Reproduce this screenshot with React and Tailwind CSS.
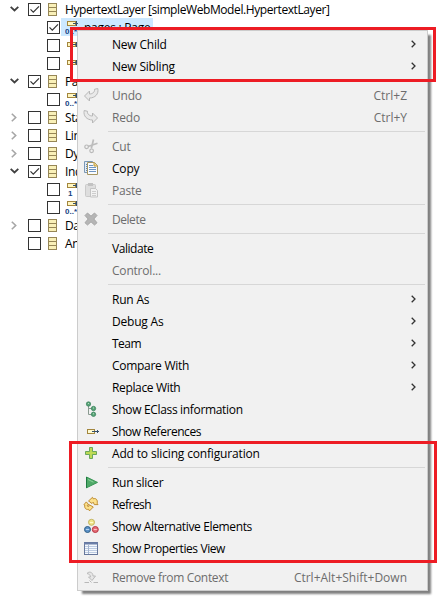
import React from "react";

const Svg = ({ children, w = 16, h = 16 }) => (
  <svg width={w} height={h} viewBox={`0 0 ${w} ${h}`} fill="none" className="block shrink-0">
    {children}
  </svg>
);

const CurvedArrow = () => (
  <path d="M1.5 9 L6.5 4 V7 C9.5 7 12 5 11.5 2.3 L14.8 1.5 C16 7 12 11 6.5 11 V14 Z" fill="#e9e9e9" stroke="#b8b8b8" strokeLinejoin="round" />
);

const icons = {
  undo: <Svg><CurvedArrow /></Svg>,
  redo: <Svg><g transform="matrix(-1 0 0 1 16 0)"><CurvedArrow /></g></Svg>,
  cut: (
    <Svg>
      <path d="M10.5 1.5 L8.3 10.5 M14.5 5.3 L5 8.5" stroke="#bcbcbc" strokeWidth="1.7" />
      <circle cx="3.6" cy="8.8" r="1.8" stroke="#b8b8b8" strokeWidth="1.2" />
      <circle cx="8.6" cy="12.8" r="1.8" stroke="#b8b8b8" strokeWidth="1.2" />
    </Svg>
  ),
  copy: (
    <Svg>
      <path d="M1.5 1.5 H9.5 V12.5 H1.5 Z" fill="#e4ecf5" stroke="#7b98b5" />
      <path d="M3 4.5 H5 M3 6.5 H5 M3 8.5 H5 M3 10.5 H5" stroke="#5c86b5" />
      <path d="M4.5 2.5 H11.5 L14.5 5.5 V14.5 H4.5 Z" fill="#fafcff" stroke="#a69662" />
      <path d="M11 2.5 V6 H14.5" fill="#efd88a" stroke="#c09a3c" />
      <path d="M6 5.5 H10 M6 7.5 H13 M6 9.5 H13 M6 11.5 H13" stroke="#6d94c2" />
    </Svg>
  ),
  paste: (
    <Svg>
      <rect x="2.5" y="2.5" width="10" height="12" rx="1" fill="#dedede" stroke="#cacaca" />
      <rect x="5" y="1" width="5" height="3" fill="#c2c2c2" />
      <path d="M7.5 6.5 H12.5 L14.5 8.5 V15 H7.5 Z" fill="#f2f2f2" stroke="#c4c4c4" />
      <path d="M9 9.5 H13 M9 11.5 H13 M9 13.5 H13" stroke="#cdcdcd" />
    </Svg>
  ),
  del: (
    <Svg>
      <path d="M2 4.5 L4.5 2 L8 5.2 L11.5 2 L14 4.5 L10.8 8 L14 11.7 L11.5 14 L8 10.8 L4.5 14 L2 11.7 L5.2 8 Z" fill="#b5b5b5" stroke="#a5a5a5" strokeLinejoin="round" />
    </Svg>
  ),
  eclass: (
    <Svg>
      <path d="M5.5 4 V13.5 H9 M5.5 7.5 H9" stroke="#8a9a90" />
      <circle cx="5.5" cy="3" r="2.2" fill="#58a377" stroke="#38805a" strokeWidth=".7" />
      <circle cx="10.5" cy="7.5" r="2.2" fill="#58a377" stroke="#38805a" strokeWidth=".7" />
      <circle cx="10.5" cy="13.3" r="2.2" fill="#58a377" stroke="#38805a" strokeWidth=".7" />
      <path d="M5 2.5 H6 M10 7 H11 M10 12.8 H11" stroke="#b7dfc4" />
    </Svg>
  ),
  refs: (
    <Svg>
      <rect x="4.5" y="6.5" width="7" height="4" fill="#fffbd2" stroke="#a3863e" />
      <path d="M9 8.5 H16 M14.5 7 V10" stroke="#35506b" />
    </Svg>
  ),
  add: (
    <Svg>
      <path d="M6.5 2.5 H9.5 V6.5 H13.5 V9.5 H9.5 V13.5 H6.5 V9.5 H2.5 V6.5 H6.5 Z" fill="#a7cf45" stroke="#6aa75c" />
      <path d="M8 3 V13 M3 8 H13" stroke="#c3dd5a" strokeWidth="1.5" />
    </Svg>
  ),
  run: (
    <Svg>
      <path d="M3.5 3 V13.8 L14.5 8.4 Z" fill="#4fa968" stroke="#3a9656" />
      <path d="M3.5 3 V13.8" stroke="#1f7a41" />
      <path d="M5 5.5 L10.5 8.2" stroke="#8bd39a" />
    </Svg>
  ),
  refresh: (
    <Svg>
      <path d="M5.5 5 L9.5 1.3 L10.2 2.8 C13.2 1.8 14.8 4 14.2 7.3 L15 8.6 H11.3 L10.2 6.2 L9 7.5 Z" fill="#fce08a" stroke="#b98426" strokeWidth=".9" strokeLinejoin="round" />
      <path d="M10.3 11 L6.5 14.9 L5.6 13.3 C2.8 14 1.2 12 1.8 9 L.9 8.7 L3.3 5.9 L5.8 8.8 L4.4 9 C4.2 10.3 4.6 10.8 5.7 10.4 L6.3 8.8 Z" fill="#fce08a" stroke="#b98426" strokeWidth=".9" strokeLinejoin="round" />
    </Svg>
  ),
  alt: (
    <Svg>
      <circle cx="8.5" cy="4.3" r="3" fill="#f0e48b" stroke="#c3b563" />
      <circle cx="4.5" cy="11.5" r="3" fill="#5b91c7" stroke="#2e5f86" />
      <circle cx="12.3" cy="11.5" r="3" fill="#e46d76" stroke="#b93543" />
      <path d="M7 4.5 H10" stroke="#fffbd0" />
      <path d="M3 11.5 H6" stroke="#b5d2ee" />
      <path d="M10.8 11.5 H13.8" stroke="#ffc0c4" />
    </Svg>
  ),
  table: (
    <Svg>
      <rect x="1.5" y="2.5" width="13" height="12" fill="#f6f9fd" stroke="#66779c" />
      <path d="M1 3.5 H15" stroke="#6b7fa8" strokeWidth="2" />
      <path d="M2 6.5 H14 M2 8.5 H14 M2 10.5 H14 M2 12.5 H14" stroke="#bccbe2" />
      <path d="M5.5 5 V14" stroke="#a5b5d0" />
    </Svg>
  ),
  remove: (
    <Svg>
      <path d="M1.5 13.5 H6 M10.5 13.5 H15" stroke="#b8b8b8" />
      <path d="M4 4.5 C6 2 10 3 10 7 H12.5 L9 11.5 L5.5 8 H7.5 C7.5 6 6 5 4 4.5 Z" fill="#e6e6e6" stroke="#bababa" />
      <path d="M6.5 11.5 L8.5 13.5" stroke="#b8b8b8" />
    </Svg>
  ),
};

const groups = [
  [
    { t: "New Child", sub: true },
    { t: "New Sibling", sub: true },
  ],
  [
    { t: "Undo", icon: "undo", off: true, key: "Ctrl+Z" },
    { t: "Redo", icon: "redo", off: true, key: "Ctrl+Y" },
  ],
  [
    { t: "Cut", icon: "cut", off: true },
    { t: "Copy", icon: "copy" },
    { t: "Paste", icon: "paste", off: true },
  ],
  [{ t: "Delete", icon: "del", off: true, fit: "tracking-[-0.45px]" }],
  [{ t: "Validate", fit: "tracking-[-0.45px]" }, { t: "Control...", off: true }],
  [
    { t: "Run As", sub: true },
    { t: "Debug As", sub: true },
    { t: "Team", sub: true, fit: "tracking-[-0.5px]" },
    { t: "Compare With", sub: true, fit: "tracking-[-0.28px]" },
    { t: "Replace With", sub: true, fit: "tracking-[-0.35px]" },
    { t: "Show EClass information", icon: "eclass", fit: "tracking-[-0.33px]" },
    { t: "Show References", icon: "refs", fit: "tracking-[-0.45px]" },
    { t: "Add to slicing configuration", icon: "add", fit: "tracking-[-0.16px]" },
  ],
  [
    { t: "Run slicer", icon: "run", fit: "tracking-[-0.3px]" },
    { t: "Refresh", icon: "refresh", fit: "tracking-[-0.55px]" },
    { t: "Show Alternative Elements", icon: "alt", fit: "tracking-[-0.36px]" },
    { t: "Show Properties View", icon: "table", fit: "tracking-[-0.4px]" },
  ],
  [{ t: "Remove from Context", icon: "remove", off: true, key: "Ctrl+Alt+Shift+Down", fit: "tracking-[-0.33px]" }],
];

const rows = [
  { t: "HypertextLayer [simpleWebModel.HypertextLayer]", open: true, on: true },
  { t: "pages : Page", child: "0..*", on: true, sel: true },
  { t: "", child: " " },
  { t: "", child: " " },
  { t: "Pa", open: true, on: true },
  { t: "", child: "0..*" },
  { t: "Sta", closed: true },
  { t: "Lin", closed: true },
  { t: "Dy", closed: true },
  { t: "Ind", open: true, on: true },
  { t: "", child: "1" },
  { t: "", child: "0..*" },
  { t: "Da", closed: true },
  { t: "An" },
];

const Check = ({ on }) => (
  <Svg w={13} h={13}>
    <rect x=".5" y=".5" width="12" height="12" fill="#fff" stroke="#333" />
    {on && <path d="M2.5 6.3 L5.3 9.2 L11 3.4" stroke="#333" strokeWidth="1.2" />}
  </Svg>
);

const ClassIcon = () => (
  <Svg w={9} h={13}>
    <rect x=".5" y=".5" width="8" height="12" fill="#f9f0b8" stroke="#968656" />
    <path d="M1 4.5 H8 M1 8.5 H8" stroke="#968656" />
  </Svg>
);

const RefIcon = ({ label }) => {
  const y = label.trim() ? 0 : 3;
  return (
    <Svg w={16} h={16}>
      <rect x="2.5" y={y + 2.5} width="8" height="4" fill="#fff6c0" stroke="#a3863e" />
      <path d={`M8 ${y + 4.5} H13 M11.5 ${y + 2} V${y + 7}`} stroke="#35506b" />
      <text x={label === "1" ? 3 : 0} y="15" fontSize="8" fontWeight="700" fill="#173f82" fontFamily="Liberation Sans, sans-serif">{label}</text>
    </Svg>
  );
};

function TreeRow({ r }) {
  return (
    <div className="flex h-[18px] items-center whitespace-nowrap">
      <div className="flex w-7 shrink-0 justify-center">
        {r.open && <Svg w={9} h={6}><path d="M.7 .8 L4.5 4.5 L8.3 .8" stroke="#404040" strokeWidth="1.8" /></Svg>}
        {r.closed && <Svg w={6} h={9}><path d="M.8 .7 L4.7 4.5 L.8 8.3" stroke="#a6a6a6" strokeWidth="1.6" /></Svg>}
      </div>
      {r.child ? (
        <>
          <div className="w-[19px] shrink-0" />
          <Check on={r.on} />
          <div className={`ml-px flex h-[18px] items-center pl-1 pr-0.5 ${r.sel ? "bg-[#cce8ff]" : ""}`}>
            <RefIcon label={r.child} />
            <span className="ml-[3px] pt-px tracking-[-0.25px]">{r.t}</span>
          </div>
        </>
      ) : (
        <>
          <Check on={r.on} />
          <div className="ml-[7px]"><ClassIcon /></div>
          <span className="ml-2 pt-px tracking-[-0.41px]">{r.t}</span>
        </>
      )}
    </div>
  );
}

function MenuItem({ m }) {
  return (
    <div className={`flex h-[22px] items-center whitespace-nowrap ${m.off ? "text-[#6d6d6d]" : "text-black"}`}>
      <div className="ml-[5px] w-[29px] shrink-0">{m.icon && icons[m.icon]}</div>
      <span className={`grow pt-px ${m.fit || "tracking-[-0.2px]"}`}>{m.t}</span>
      {m.key && <span className="mr-5 pt-px">{m.key}</span>}
      {m.sub && <span className="mr-[11px]"><Svg w={5} h={8}><path d="M.7 .7 L4 4 L.7 7.3" stroke="#333" strokeWidth="1.3" /></Svg></span>}
    </div>
  );
}

export default function App() {
  return (
    <div className="relative h-[603px] w-[441px] overflow-hidden bg-white font-['Open_Sans',sans-serif] text-[12px] leading-[18px] text-black">
      {rows.map((r, i) => <TreeRow key={i} r={r} />)}

      <div className="absolute left-[77px] top-[30px] h-[561px] w-[351px] border border-[#cccccc] bg-[#f1f1f1] pt-0.5 shadow-[4px_4px_2px_-1px_#808080]">
        {groups.map((g, i) => (
          <React.Fragment key={i}>
            {i > 0 && <div className="ml-[30px] mr-0.5 flex h-[7px] items-center"><div className="h-px w-full bg-[#d7d7d7]" /></div>}
            {g.map((m) => <MenuItem key={m.t} m={m} />)}
          </React.Fragment>
        ))}
      </div>

      <div className="absolute left-[70px] top-[27px] h-[55px] w-[366px] border-[3px] border-[#ed1c24]" />
      <div className="absolute left-[69px] top-[441px] h-[122px] w-[368px] border-[3px] border-[#ed1c24]" />
    </div>
  );
}
